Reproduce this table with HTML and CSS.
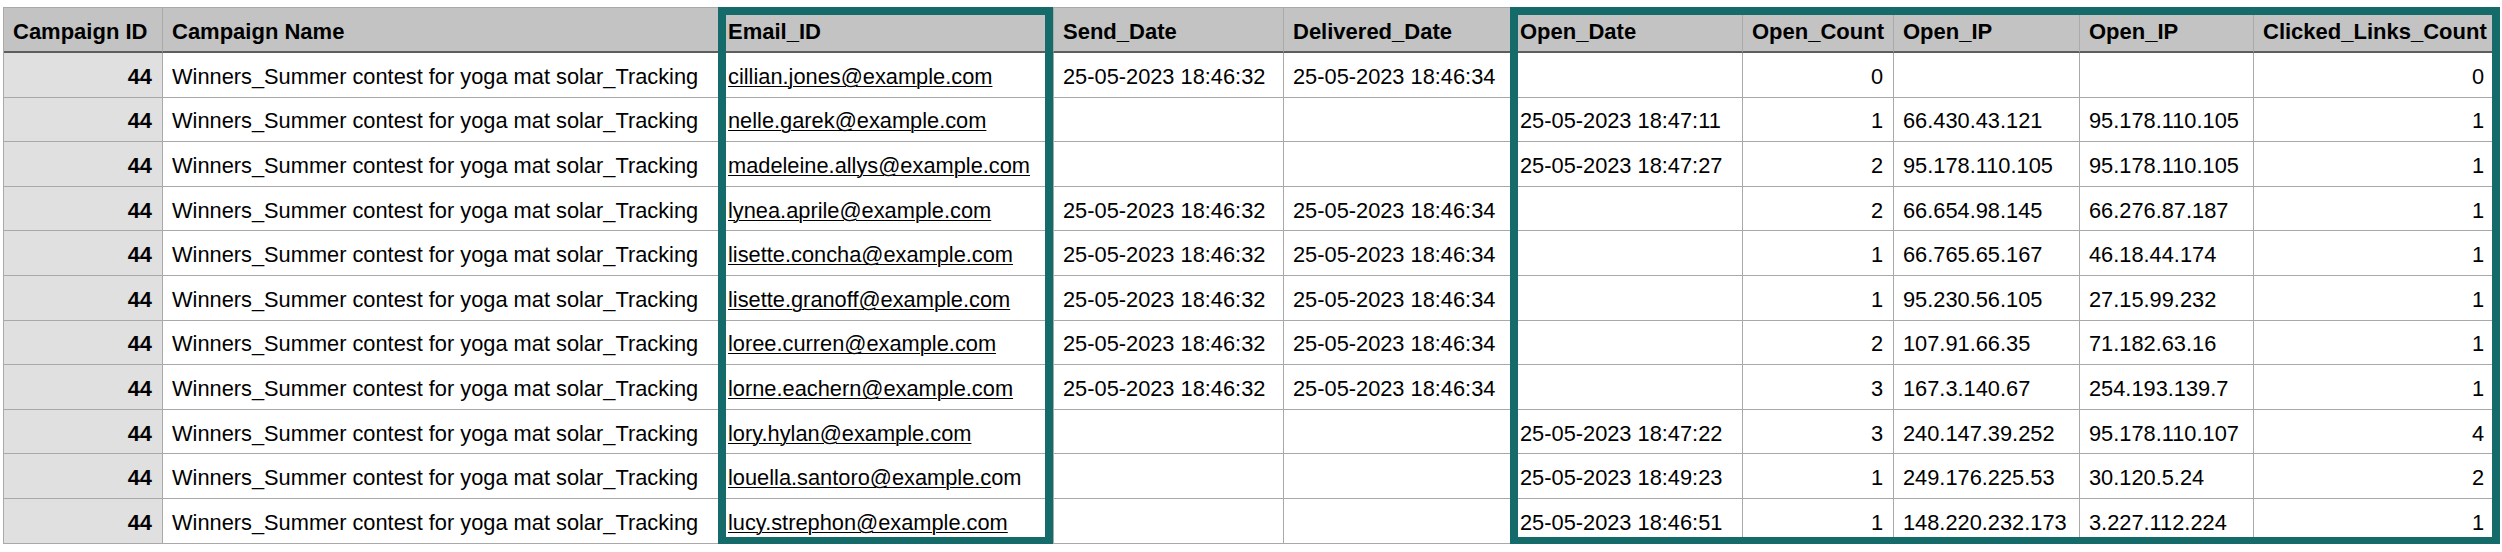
FILE: index.html
```html
<!DOCTYPE html>
<html lang="en">
<head>
<meta charset="utf-8">
<title>Campaign tracking</title>
<link rel="stylesheet" href="styles.css">
</head>
<body>
<div class="sheet">
  <div class="grid">
    <div class="c h">Campaign ID</div>
    <div class="c h">Campaign Name</div>
    <div class="c h">Email_ID</div>
    <div class="c h">Send_Date</div>
    <div class="c h">Delivered_Date</div>
    <div class="c h">Open_Date</div>
    <div class="c h">Open_Count</div>
    <div class="c h">Open_IP</div>
    <div class="c h">Open_IP</div>
    <div class="c h">Clicked_Links_Count</div>

    <div class="c id">44</div><div class="c">Winners_Summer contest for yoga mat solar_Tracking</div><div class="c"><u>cillian.jones@example.com</u></div><div class="c">25-05-2023 18:46:32</div><div class="c">25-05-2023 18:46:34</div><div class="c"></div><div class="c num">0</div><div class="c"></div><div class="c"></div><div class="c num">0</div>

    <div class="c id">44</div><div class="c">Winners_Summer contest for yoga mat solar_Tracking</div><div class="c"><u>nelle.garek@example.com</u></div><div class="c"></div><div class="c"></div><div class="c">25-05-2023 18:47:11</div><div class="c num">1</div><div class="c">66.430.43.121</div><div class="c">95.178.110.105</div><div class="c num">1</div>

    <div class="c id">44</div><div class="c">Winners_Summer contest for yoga mat solar_Tracking</div><div class="c"><u>madeleine.allys@example.com</u></div><div class="c"></div><div class="c"></div><div class="c">25-05-2023 18:47:27</div><div class="c num">2</div><div class="c">95.178.110.105</div><div class="c">95.178.110.105</div><div class="c num">1</div>

    <div class="c id">44</div><div class="c">Winners_Summer contest for yoga mat solar_Tracking</div><div class="c"><u>lynea.aprile@example.com</u></div><div class="c">25-05-2023 18:46:32</div><div class="c">25-05-2023 18:46:34</div><div class="c"></div><div class="c num">2</div><div class="c">66.654.98.145</div><div class="c">66.276.87.187</div><div class="c num">1</div>

    <div class="c id">44</div><div class="c">Winners_Summer contest for yoga mat solar_Tracking</div><div class="c"><u>lisette.concha@example.com</u></div><div class="c">25-05-2023 18:46:32</div><div class="c">25-05-2023 18:46:34</div><div class="c"></div><div class="c num">1</div><div class="c">66.765.65.167</div><div class="c">46.18.44.174</div><div class="c num">1</div>

    <div class="c id">44</div><div class="c">Winners_Summer contest for yoga mat solar_Tracking</div><div class="c"><u>lisette.granoff@example.com</u></div><div class="c">25-05-2023 18:46:32</div><div class="c">25-05-2023 18:46:34</div><div class="c"></div><div class="c num">1</div><div class="c">95.230.56.105</div><div class="c">27.15.99.232</div><div class="c num">1</div>

    <div class="c id">44</div><div class="c">Winners_Summer contest for yoga mat solar_Tracking</div><div class="c"><u>loree.curren@example.com</u></div><div class="c">25-05-2023 18:46:32</div><div class="c">25-05-2023 18:46:34</div><div class="c"></div><div class="c num">2</div><div class="c">107.91.66.35</div><div class="c">71.182.63.16</div><div class="c num">1</div>

    <div class="c id">44</div><div class="c">Winners_Summer contest for yoga mat solar_Tracking</div><div class="c"><u>lorne.eachern@example.com</u></div><div class="c">25-05-2023 18:46:32</div><div class="c">25-05-2023 18:46:34</div><div class="c"></div><div class="c num">3</div><div class="c">167.3.140.67</div><div class="c">254.193.139.7</div><div class="c num">1</div>

    <div class="c id">44</div><div class="c">Winners_Summer contest for yoga mat solar_Tracking</div><div class="c"><u>lory.hylan@example.com</u></div><div class="c"></div><div class="c"></div><div class="c">25-05-2023 18:47:22</div><div class="c num">3</div><div class="c">240.147.39.252</div><div class="c">95.178.110.107</div><div class="c num">4</div>

    <div class="c id">44</div><div class="c">Winners_Summer contest for yoga mat solar_Tracking</div><div class="c"><u>louella.santoro@example.c</u>om</div><div class="c"></div><div class="c"></div><div class="c">25-05-2023 18:49:23</div><div class="c num">1</div><div class="c">249.176.225.53</div><div class="c">30.120.5.24</div><div class="c num">2</div>

    <div class="c id">44</div><div class="c">Winners_Summer contest for yoga mat solar_Tracking</div><div class="c"><u>lucy.strephon@example.com</u></div><div class="c"></div><div class="c"></div><div class="c">25-05-2023 18:46:51</div><div class="c num">1</div><div class="c">148.220.232.173</div><div class="c">3.227.112.224</div><div class="c num">1</div>
  </div>
  <div class="highlight hl-email"></div>
  <div class="highlight hl-open"></div>
</div>
</body>
</html>
```

FILE: styles.css
```css
html, body {
  margin: 0;
  padding: 0;
  background: #ffffff;
}

body {
  font-family: "Liberation Sans", Arial, Helvetica, sans-serif;
  color: #000000;
}

.sheet {
  position: relative;
  margin: 7px 0 0 3px;
  width: fit-content;
}

.grid {
  display: grid;
  grid-template-columns: 159px 556px 335px 230px 227px 232px 151px 186px 174px 241px;
  grid-template-rows: 45px repeat(11, 44.6px);
  border-top: 1px solid #a9a9a9;
  border-left: 1px solid #a9a9a9;
}

.c {
  box-sizing: border-box;
  display: flex;
  align-items: center;
  padding: 4px 10px 0 9px;
  border-right: 1px solid #a9a9a9;
  border-bottom: 1px solid #a9a9a9;
  font-size: 21.8px;
  white-space: nowrap;
  overflow: hidden;
  background: #ffffff;
}

.c u {
  text-decoration: underline;
  text-decoration-thickness: 1px;
  text-underline-offset: 2px;
}

.h {
  background: #c2c3c2;
  font-weight: bold;
  font-size: 22px;
  border-bottom: 2px solid #5e5e5e;
  border-right-color: #aaaaaa;
}

.id {
  background: #e0e0e0;
  font-weight: bold;
  justify-content: flex-end;
}

.num {
  justify-content: flex-end;
}

.highlight {
  position: absolute;
  top: 0;
  height: 538px;
  box-sizing: border-box;
  border: 8px solid #146b69;
  pointer-events: none;
}

.hl-email {
  left: 715px;
  width: 335px;
}

.hl-open {
  left: 1507px;
  width: 990px;
}
```
